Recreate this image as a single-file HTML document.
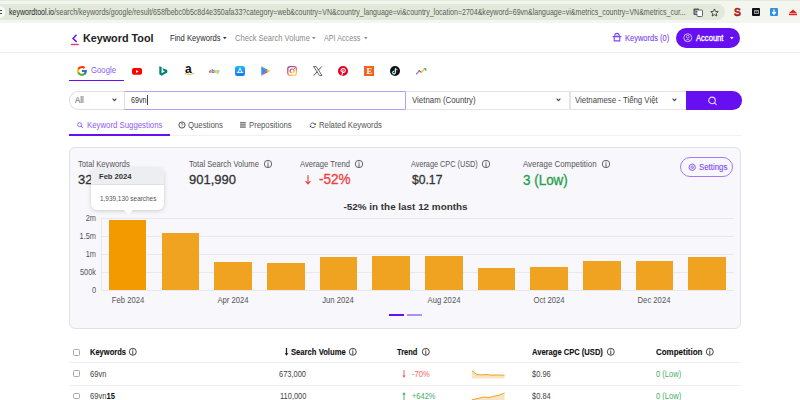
<!DOCTYPE html>
<html><head><meta charset="utf-8">
<style>
*{margin:0;padding:0;box-sizing:border-box}
html,body{width:800px;height:400px;overflow:hidden;background:#fff;font-family:"Liberation Sans",sans-serif;color:#333}
.a{position:absolute;white-space:nowrap}
svg.a{overflow:visible}
</style></head><body>
<div class="a" style="left:0px;top:0px;width:800px;height:23px;background:#f3f6ef"></div>
<div class="a" style="left:0px;top:0px;width:800px;height:1px;background:#e6ebe0"></div>
<div class="a" style="left:-20px;top:4px;width:745px;height:16px;border-radius:8px;background:#e2e9da"></div>
<div class="a" style="left:-5px;top:6px;width:10px;height:12px;border-radius:6px;background:#f6f8f3"></div>
<svg class="a" style="left:-2px;top:9px;" width="6" height="6" viewBox="0 0 6 6"><path d="M0 1.5H4M0 4.5H4" stroke="#444" stroke-width="1.2"/></svg>
<div class="a" style="left:8.60px;top:8px;font-size:9.165px;line-height:1;color:#5a5d58;font-weight:normal;transform:scaleX(0.7692);transform-origin:0 0;"><span style="color:#1f1f1f">keywordtool.io</span>/search/keywords/google/result/658fbebc0b5c8d4e350afa33?category=web&amp;country=VN&amp;country_language=vi&amp;country_location=2704&amp;keyword=69vn&amp;language=vi&amp;metrics_country=VN&amp;metrics_cur...</div>
<svg class="a" style="left:693px;top:8px;" width="10" height="9" viewBox="0 0 10 9"><rect x="0.5" y="0.5" width="5.5" height="6.5" rx="0.8" fill="#555"/><rect x="4" y="2" width="5.5" height="6.5" rx="0.8" fill="#fff" stroke="#555" stroke-width="0.9"/><text x="1.4" y="5.6" font-size="5" fill="#fff" font-family="Liberation Sans">G</text></svg>
<svg class="a" style="left:709.5px;top:8px;" width="9" height="9" viewBox="0 0 24 24"><path d="M12 2.5l2.9 6.6 7.1.6-5.4 4.7 1.6 7-6.2-3.7-6.2 3.7 1.6-7L2 9.7l7.1-.6z" fill="none" stroke="#3c3c3c" stroke-width="2.4" stroke-linejoin="round"/></svg>
<svg class="a" style="left:734px;top:8px;" width="9" height="9" viewBox="0 0 9 9"><text x="0" y="8.2" font-size="10.5" font-weight="bold" fill="#d42a20" font-family="Liberation Sans" stroke="#7a1010" stroke-width="0.4">S</text></svg>
<div class="a" style="left:752px;top:8px;width:8px;height:8px;background:#111;border-radius:1px"></div>
<svg class="a" style="left:753.5px;top:10px;" width="5" height="4" viewBox="0 0 5 4"><path d="M0.5 0.5h4v3h-4z M1.5 1.8h2" fill="none" stroke="#ddd" stroke-width="0.7"/></svg>
<div class="a" style="left:770px;top:8px;width:8px;height:8px;background:#2f8fe0;border-radius:1px"></div>
<svg class="a" style="left:771px;top:9px;" width="6" height="6" viewBox="0 0 6 6"><path d="M3 0.3V4.5M1.2 3L3 5.2 4.8 3" fill="none" stroke="#fff" stroke-width="1.2"/></svg>
<svg class="a" style="left:788px;top:9px;" width="10" height="7" viewBox="0 0 10 7"><path d="M5 0.5L9 4H1z" fill="#e02020"/><rect x="1" y="4.6" width="8" height="1.6" fill="#e02020"/></svg>
<div class="a" style="left:0px;top:52px;width:800px;height:1px;background:#eeeef2"></div>
<svg class="a" style="left:70px;top:33px;" width="10" height="13" viewBox="0 0 10 13"><path d="M6.5 1.8L3 5.4L6.7 9" fill="none" stroke="#5f1ef0" stroke-width="1.5" stroke-linejoin="miter"/><rect x="0.9" y="10.8" width="7.9" height="1.4" fill="#e5358f"/></svg>
<div class="a" style="left:82.90px;top:33px;font-size:10.800px;line-height:1;color:#222;font-weight:bold;">Keyword Tool</div>
<div class="a" style="left:170.00px;top:34px;font-size:9.180px;line-height:1;color:#2b2b2b;font-weight:normal;transform:scaleX(0.8333);transform-origin:0 0;">Find Keywords</div>
<svg class="a" style="left:223.3px;top:37.3px;" width="3.6" height="2.2" viewBox="0 0 4 2.4"><path d="M0 0H4L2 2.4z" fill="#333"/></svg>
<div class="a" style="left:234.70px;top:34px;font-size:9.096px;line-height:1;color:#8a8a8a;font-weight:normal;transform:scaleX(0.8333);transform-origin:0 0;">Check Search Volume</div>
<svg class="a" style="left:312.3px;top:37.3px;" width="3.6" height="2.2" viewBox="0 0 4 2.4"><path d="M0 0H4L2 2.4z" fill="#888"/></svg>
<div class="a" style="left:324.40px;top:34px;font-size:8.640px;line-height:1;color:#8a8a8a;font-weight:normal;transform:scaleX(0.8333);transform-origin:0 0;">API Access</div>
<svg class="a" style="left:364px;top:37.3px;" width="3.6" height="2.2" viewBox="0 0 4 2.4"><path d="M0 0H4L2 2.4z" fill="#888"/></svg>
<svg class="a" style="left:612px;top:32px;" width="10" height="10" viewBox="0 0 10 10"><path d="M2.8 4.4V3.6A2.2 2.2 0 0 1 7.2 3.6V4.4" fill="none" stroke="#7b45f3" stroke-width="1.1"/><path d="M1 4.6H9" stroke="#7b45f3" stroke-width="1.2" stroke-linecap="round"/><path d="M2.2 4.8V8.9H7.8V4.8" fill="none" stroke="#7b45f3" stroke-width="1.1" stroke-linejoin="round"/><circle cx="4.2" cy="3.3" r="0.45" fill="#7b45f3"/><circle cx="5.8" cy="3.3" r="0.45" fill="#7b45f3"/></svg>
<div class="a" style="left:624.70px;top:34px;font-size:8.648px;line-height:1;color:#7b45f3;font-weight:normal;transform:scaleX(0.8696);transform-origin:0 0;-webkit-text-stroke:0.1px currentColor">Keywords (0)</div>
<div class="a" style="left:676px;top:28.2px;width:64.2px;height:19.5px;border-radius:10px;background:#6610f2"></div>
<svg class="a" style="left:682.5px;top:33px;" width="9.5" height="9.5" viewBox="0 0 10 10"><circle cx="5" cy="5" r="4.2" fill="none" stroke="#dccbff" stroke-width="0.9"/><circle cx="5" cy="3.9" r="1.45" fill="none" stroke="#dccbff" stroke-width="0.85"/><path d="M2.6 8.2C3.2 6.4 6.8 6.4 7.4 8.2" fill="none" stroke="#dccbff" stroke-width="0.85"/></svg>
<div class="a" style="left:696.40px;top:34px;font-size:8.740px;line-height:1;color:#fff;font-weight:normal;transform:scaleX(0.8696);transform-origin:0 0;-webkit-text-stroke:0.3px currentColor">Account</div>
<svg class="a" style="left:730px;top:37px;" width="3.6" height="2.2" viewBox="0 0 4 2.4"><path d="M0 0H4L2 2.4z" fill="#fff"/></svg>
<div class="a" style="left:69px;top:79.8px;width:55px;height:1.6px;background:#6610f2"></div>
<svg class="a" style="left:77px;top:66.2px;" width="9.8" height="9.8" viewBox="4 4 40 40"><path fill="#FFC107" d="M43.6 20.1H42V20H24v8h11.3C33.7 32.7 29.2 36 24 36c-6.6 0-12-5.4-12-12s5.4-12 12-12c3.1 0 5.8 1.2 7.9 3.1l5.7-5.7C34 6.1 29.3 4 24 4 13 4 4 13 4 24s9 20 20 20 20-9 20-20c0-1.3-.1-2.6-.4-3.9z"/><path fill="#FF3D00" d="M6.3 14.7l6.6 4.8C14.7 15.1 19 12 24 12c3.1 0 5.8 1.2 7.9 3.1l5.7-5.7C34 6.1 29.3 4 24 4 16.3 4 9.7 8.3 6.3 14.7z"/><path fill="#4CAF50" d="M24 44c5.2 0 9.9-2 13.4-5.2l-6.2-5.2C29.2 35.1 26.7 36 24 36c-5.2 0-9.6-3.3-11.3-8l-6.5 5C9.5 39.6 16.2 44 24 44z"/><path fill="#1976D2" d="M43.6 20.1H42V20H24v8h11.3c-.8 2.2-2.2 4.2-4.1 5.6l6.2 5.2C37 39.2 44 34 44 24c0-1.3-.1-2.6-.4-3.9z"/></svg>
<div class="a" style="left:90.80px;top:66px;font-size:8.912px;line-height:1;color:#8a5cf6;font-weight:normal;transform:scaleX(0.8696);transform-origin:0 0;">Google</div>
<svg class="a" style="left:132px;top:67.6px;" width="10" height="6.8" viewBox="0 0 10 6.8"><rect width="10" height="6.8" rx="1.8" fill="#ff0000"/><path d="M4 1.9L6.6 3.4L4 4.9z" fill="#fff"/></svg>
<svg class="a" style="left:158.6px;top:66px;" width="8.6" height="10" viewBox="0 0 8.6 10"><path d="M0.3 0.2L2.6 1v6.3l3.3-1.9-1.6-0.8-1-2.3 5 1.7v2.6L2.6 9.8 0.3 8.3z" fill="#008373"/></svg>
<svg class="a" style="left:183.5px;top:66px;" width="11" height="10" viewBox="0 0 11 10"><text x="1.1" y="6.9" font-size="12" font-weight="bold" fill="#111" font-family="Liberation Sans">a</text><path d="M0.5 7.6Q5.5 9.6 10.5 7.4" fill="none" stroke="#f6b24a" stroke-width="1"/></svg>
<svg class="a" style="left:209px;top:68px;" width="11" height="5" viewBox="0 0 11 5"><text x="0" y="4.6" font-size="5" font-weight="bold" font-family="Liberation Sans" letter-spacing="-0.3"><tspan fill="#e53238">e</tspan><tspan fill="#0064d2">b</tspan><tspan fill="#f5af02">a</tspan><tspan fill="#86b817">y</tspan></text></svg>
<svg class="a" style="left:235.2px;top:66px;" width="10" height="10" viewBox="0 0 10 10"><defs><linearGradient id="as" x1="0" y1="0" x2="0" y2="1"><stop offset="0" stop-color="#1ebbf5"/><stop offset="1" stop-color="#1d6ff2"/></linearGradient></defs><rect width="10" height="10" rx="2.2" fill="url(#as)"/><path d="M5.3 2.2L3 6.4M4.7 2.2L7 6.4M2.2 6.4H7.8" stroke="#fff" stroke-width="0.9" stroke-linecap="round"/></svg>
<svg class="a" style="left:261.3px;top:66px;" width="9.5" height="10" viewBox="0 0 9.5 10"><path d="M0.3 0.3L5.6 5 0.3 9.7z" fill="#4285f4"/><path d="M0.3 0.3L7.2 4.1 5.6 5z" fill="#34a853"/><path d="M0.3 9.7L7.2 5.9 5.6 5z" fill="#ea4335"/><path d="M7.2 4.1L9.3 5 7.2 5.9 5.6 5z" fill="#fbbc04"/></svg>
<svg class="a" style="left:286.8px;top:66px;" width="10.2" height="10" viewBox="0 0 10 10"><defs><linearGradient id="ig" x1="0" y1="0" x2="0.6" y2="1"><stop offset="0" stop-color="#8a3ab9"/><stop offset="0.5" stop-color="#e95950"/><stop offset="1" stop-color="#fccc63"/></linearGradient></defs><rect x="0.7" y="0.7" width="8.6" height="8.6" rx="2.4" fill="none" stroke="url(#ig)" stroke-width="1.3"/><circle cx="5" cy="5" r="2" fill="none" stroke="url(#ig)" stroke-width="1.2"/><circle cx="7.4" cy="2.6" r="0.5" fill="#c13584"/></svg>
<svg class="a" style="left:312.7px;top:66px;" width="9.5" height="10" viewBox="0 0 9.5 10"><path d="M0.6 0.5h2.6l5.8 9h-2.6z" fill="none" stroke="#444" stroke-width="0.8"/><path d="M8.6 0.5L5.3 4.3M0.8 9.5L4.2 5.7" stroke="#444" stroke-width="0.9"/></svg>
<svg class="a" style="left:338.4px;top:66px;" width="10" height="10" viewBox="0 0 10 10"><circle cx="5" cy="5" r="5" fill="#e60023"/><path d="M3.4 5.6C2.8 5 2.9 3.9 3.6 3.2 4.6 2.2 6.8 2.4 7.2 3.8 7.6 5.3 6.5 6.7 5.2 6.4" fill="none" stroke="#fff" stroke-width="1.05" stroke-linecap="round"/><path d="M5.1 4.1L4 9.2" fill="none" stroke="#fff" stroke-width="1.1" stroke-linecap="round"/></svg>
<svg class="a" style="left:364.1px;top:66px;" width="10" height="10" viewBox="0 0 10 10"><rect width="10" height="10" fill="#f1641e"/><text x="2.4" y="8.3" font-size="8.5" fill="#fff" font-family="Liberation Serif" font-weight="bold">E</text></svg>
<svg class="a" style="left:390px;top:66px;" width="10" height="10" viewBox="0 0 10 10"><circle cx="5" cy="5" r="5" fill="#111"/><path d="M5.6 2.2v4.3a1.4 1.4 0 1 1-1.3-1.4" fill="none" stroke="#25f4ee" stroke-width="1" transform="translate(-0.4 0.2)"/><path d="M5.6 2.2v4.3a1.4 1.4 0 1 1-1.3-1.4M5.6 2.4c0.4 0.9 1 1.3 1.8 1.3" fill="none" stroke="#fff" stroke-width="0.9"/><path d="M5.8 2.4c0.4 0.9 1 1.3 1.8 1.3" fill="none" stroke="#fe2c55" stroke-width="0.5" transform="translate(0.3 0.3)"/></svg>
<svg class="a" style="left:415.7px;top:68.2px;" width="10.5" height="6.5" viewBox="0 0 10.5 6.5"><path d="M0.6 5.8L3.2 2.8" stroke="#4285f4" stroke-width="1.2" stroke-linecap="round"/><path d="M3.2 2.8L5.2 4.4" stroke="#ea4335" stroke-width="1.2" stroke-linecap="round"/><path d="M5.2 4.4L7.6 1.9" stroke="#fbbc04" stroke-width="1.2" stroke-linecap="round"/><path d="M7.2 0.2H10.3V3.2z" fill="#34a853"/></svg>
<div class="a" style="left:68.75px;top:91px;width:56.5px;height:18.5px;border:1px solid #e1e1e6;border-right:none;border-radius:9.25px 0 0 9.25px;background:#fff"></div>
<div class="a" style="left:75.25px;top:95px;font-size:9.444px;line-height:1;color:#555;font-weight:normal;transform:scaleX(0.8333);transform-origin:0 0;">All</div>
<svg class="a" style="left:111.9px;top:98.3px;" width="5" height="3.4" viewBox="0 0 5 3.4"><path d="M0.6 0.6L2.5 2.6 4.4 0.6" fill="none" stroke="#444" stroke-width="1.1"/></svg>
<div class="a" style="left:124.4px;top:91px;width:281.6px;height:18.5px;border:1px solid #b99cf7;border-left:1px solid #e1e1e6;background:#fff"></div>
<div class="a" style="left:131.00px;top:96px;font-size:8.640px;line-height:1;color:#333;font-weight:normal;transform:scaleX(0.8333);transform-origin:0 0;">69vn</div>
<div class="a" style="left:147.2px;top:95px;width:0.7px;height:9.8px;background:#444"></div>
<div class="a" style="left:405px;top:91px;width:164.5px;height:18.5px;border:1px solid #e4e4e8;border-left:1px solid #b99cf7;background:#fff"></div>
<div class="a" style="left:411.90px;top:95px;font-size:9.444px;line-height:1;color:#444;font-weight:normal;transform:scaleX(0.8333);transform-origin:0 0;">Vietnam (Country)</div>
<svg class="a" style="left:555.7px;top:98.3px;" width="5" height="3.4" viewBox="0 0 5 3.4"><path d="M0.6 0.6L2.5 2.6 4.4 0.6" fill="none" stroke="#444" stroke-width="1.1"/></svg>
<div class="a" style="left:569.5px;top:91px;width:117px;height:18.5px;border:1px solid #e4e4e8;border-left:1px solid #e4e4e8;background:#fff"></div>
<div class="a" style="left:575.25px;top:95px;font-size:9.396px;line-height:1;color:#444;font-weight:normal;transform:scaleX(0.8333);transform-origin:0 0;">Vietnamese - Tiếng Việt</div>
<svg class="a" style="left:672.2px;top:98.3px;" width="5" height="3.4" viewBox="0 0 5 3.4"><path d="M0.6 0.6L2.5 2.6 4.4 0.6" fill="none" stroke="#444" stroke-width="1.1"/></svg>
<div class="a" style="left:686px;top:91px;width:56px;height:18.5px;border-radius:0 9.25px 9.25px 0;background:#6610f2"></div>
<svg class="a" style="left:707px;top:95px;" width="11" height="11" viewBox="0 0 11 11"><circle cx="5" cy="5.4" r="3.3" fill="none" stroke="#e2d4ff" stroke-width="1.05"/><path d="M7.4 7.8L9.3 9.6" stroke="#e2d4ff" stroke-width="1.1" stroke-linecap="round"/></svg>
<div class="a" style="left:69px;top:135px;width:672px;height:1px;background:#f1f1f4"></div>
<div class="a" style="left:69px;top:133.9px;width:101px;height:1.7px;background:#6610f2"></div>
<svg class="a" style="left:77.2px;top:121.9px;" width="6.4" height="6.4" viewBox="0 0 10 10"><circle cx="4.2" cy="4.2" r="3.2" fill="none" stroke="#8b5cf6" stroke-width="1.4"/><path d="M6.6 6.6L9.2 9.2" stroke="#8b5cf6" stroke-width="1.5" stroke-linecap="round"/></svg>
<div class="a" style="left:86.90px;top:121px;font-size:8.970px;line-height:1;color:#8b5cf6;font-weight:normal;transform:scaleX(0.8696);transform-origin:0 0;">Keyword Suggestions</div>
<svg class="a" style="left:177.5px;top:120.65px;" width="8" height="8" viewBox="0 0 8 8"><circle cx="4" cy="4" r="3.1" fill="none" stroke="#555" stroke-width="1"/><path d="M3 3.1C3.1 2.2 4.9 2.2 4.9 3.2 4.9 3.9 4 3.9 4 4.7" fill="none" stroke="#555" stroke-width="0.8"/><circle cx="4" cy="5.6" r="0.45" fill="#555"/></svg>
<div class="a" style="left:187.90px;top:121px;font-size:8.935px;line-height:1;color:#555;font-weight:normal;transform:scaleX(0.8696);transform-origin:0 0;">Questions</div>
<svg class="a" style="left:240px;top:122px;" width="5.8" height="5.8" viewBox="0 0 6 6"><rect x="0" y="0" width="6" height="1.5" fill="#777"/><rect x="0" y="2.25" width="6" height="1.5" fill="#777"/><rect x="0" y="4.5" width="6" height="1.5" fill="#777"/></svg>
<div class="a" style="left:249.20px;top:121px;font-size:8.912px;line-height:1;color:#555;font-weight:normal;transform:scaleX(0.8696);transform-origin:0 0;">Prepositions</div>
<svg class="a" style="left:308.5px;top:121.5px;" width="7.5" height="6.5" viewBox="0 0 7.5 6.5"><path d="M1.2 2.6A2.8 2.8 0 0 1 6.2 2.4" fill="none" stroke="#555" stroke-width="0.9"/><path d="M6.4 4A2.8 2.8 0 0 1 1.4 4.2" fill="none" stroke="#555" stroke-width="0.9"/><path d="M5 2.7L6.9 2.9 6.7 1z" fill="#333"/><path d="M2.6 3.8L0.7 3.6 0.9 5.5z" fill="#333"/></svg>
<div class="a" style="left:318.50px;top:121px;font-size:8.912px;line-height:1;color:#555;font-weight:normal;transform:scaleX(0.8696);transform-origin:0 0;">Related Keywords</div>
<div class="a" style="left:69.4px;top:147.4px;width:671.6px;height:181.6px;border:1px solid #e1e1e8;border-radius:6px;background:#f8f7fc"></div>
<div class="a" style="left:77.50px;top:160px;font-size:8.568px;line-height:1;color:#555;font-weight:normal;transform:scaleX(0.8929);transform-origin:0 0;">Total Keywords</div>
<div class="a" style="left:77.50px;top:173px;font-size:13.520px;line-height:1;color:#333;font-weight:normal;transform:scaleX(0.9615);transform-origin:0 0;-webkit-text-stroke:0.3px currentColor">32</div>
<div class="a" style="left:189.00px;top:160px;font-size:8.546px;line-height:1;color:#555;font-weight:normal;transform:scaleX(0.8929);transform-origin:0 0;">Total Search Volume</div>
<svg class="a" style="left:263.4px;top:158.9px;" width="10" height="10" viewBox="0 0 10 10"><circle cx="5" cy="5" r="3.7" fill="none" stroke="#555" stroke-width="0.9"/><rect x="4.55" y="4.2" width="0.9" height="3.80" fill="#555"/><circle cx="5" cy="3.1" r="0.55" fill="#555"/></svg>
<div class="a" style="left:188.75px;top:173px;font-size:13.520px;line-height:1;color:#333;font-weight:normal;transform:scaleX(0.9615);transform-origin:0 0;-webkit-text-stroke:0.3px currentColor">901,990</div>
<div class="a" style="left:300.00px;top:160px;font-size:8.557px;line-height:1;color:#555;font-weight:normal;transform:scaleX(0.8929);transform-origin:0 0;">Average Trend</div>
<svg class="a" style="left:354.25px;top:158.9px;" width="10" height="10" viewBox="0 0 10 10"><circle cx="5" cy="5" r="3.7" fill="none" stroke="#555" stroke-width="0.9"/><rect x="4.55" y="4.2" width="0.9" height="3.80" fill="#555"/><circle cx="5" cy="3.1" r="0.55" fill="#555"/></svg>
<svg class="a" style="left:304.5px;top:174.5px;" width="6" height="9.5" viewBox="0 0 6 9.5"><path d="M3 0V8.8M0.6 6.2L3 8.9 5.4 6.2" fill="none" stroke="#f03c3c" stroke-width="1.1"/></svg>
<div class="a" style="left:318.50px;top:172px;font-size:14.040px;line-height:1;color:#f03c3c;font-weight:normal;transform:scaleX(0.9615);transform-origin:0 0;-webkit-text-stroke:0.3px currentColor">-52%</div>
<div class="a" style="left:411.25px;top:161px;font-size:8.186px;line-height:1;color:#555;font-weight:normal;transform:scaleX(0.8929);transform-origin:0 0;">Average CPC (USD)</div>
<svg class="a" style="left:480.5px;top:158.9px;" width="10" height="10" viewBox="0 0 10 10"><circle cx="5" cy="5" r="3.7" fill="none" stroke="#555" stroke-width="0.9"/><rect x="4.55" y="4.2" width="0.9" height="3.80" fill="#555"/><circle cx="5" cy="3.1" r="0.55" fill="#555"/></svg>
<div class="a" style="left:411.90px;top:174px;font-size:12.636px;line-height:1;color:#333;font-weight:normal;transform:scaleX(0.9615);transform-origin:0 0;-webkit-text-stroke:0.3px currentColor">$0.17</div>
<div class="a" style="left:522.75px;top:160px;font-size:8.859px;line-height:1;color:#555;font-weight:normal;transform:scaleX(0.8929);transform-origin:0 0;">Average Competition</div>
<svg class="a" style="left:601px;top:158.9px;" width="10" height="10" viewBox="0 0 10 10"><circle cx="5" cy="5" r="3.7" fill="none" stroke="#555" stroke-width="0.9"/><rect x="4.55" y="4.2" width="0.9" height="3.80" fill="#555"/><circle cx="5" cy="3.1" r="0.55" fill="#555"/></svg>
<div class="a" style="left:523.10px;top:173px;font-size:13.988px;line-height:1;color:#22a04b;font-weight:normal;transform:scaleX(0.9615);transform-origin:0 0;-webkit-text-stroke:0.3px currentColor">3 (Low)</div>
<div class="a" style="left:679.8px;top:157px;width:53px;height:19.7px;border:1px solid #a57af6;border-radius:10px"></div>
<svg class="a" style="left:687.6px;top:162.8px;" width="8.4" height="8.4" viewBox="0 0 24 24"><path fill="none" stroke="#7c4af4" stroke-width="2.8" d="M12 2.5l2 1.8 2.7-.4 1.1 2.5 2.5 1.1-.4 2.7 1.8 2-1.8 2 .4 2.7-2.5 1.1-1.1 2.5-2.7-.4-2 1.8-2-1.8-2.7.4-1.1-2.5-2.5-1.1.4-2.7-1.8-2 1.8-2-.4-2.7 2.5-1.1 1.1-2.5 2.7.4z"/><circle cx="12" cy="12" r="3.4" fill="none" stroke="#7c4af4" stroke-width="2.6"/></svg>
<div class="a" style="left:698.60px;top:163px;font-size:9.039px;line-height:1;color:#7c4af4;font-weight:normal;transform:scaleX(0.8696);transform-origin:0 0;-webkit-text-stroke:0.12px currentColor">Settings</div>
<div class="a" style="left:343.50px;top:202px;font-size:9.900px;line-height:1;color:#333;font-weight:bold;">-52% in the last 12 months</div>
<div class="a" style="left:100.6px;top:217.8px;width:633px;height:1px;background:#e8e8ee"></div>
<div class="a" style="left:100.6px;top:235.9px;width:633px;height:1px;background:#e8e8ee"></div>
<div class="a" style="left:100.6px;top:253.9px;width:633px;height:1px;background:#e8e8ee"></div>
<div class="a" style="left:100.6px;top:271.9px;width:633px;height:1px;background:#e8e8ee"></div>
<div class="a" style="left:100.6px;top:289.9px;width:633px;height:1px;background:#e8e8ee"></div>
<div class="a" style="left:100.6px;top:217.8px;width:1px;height:73px;background:#e8e8ee"></div>
<div class="a" style="left:96.00px;top:214px;font-size:8.856px;line-height:1;color:#555;font-weight:normal;transform:translateX(-100%) scaleX(0.8333);transform-origin:100% 0;">2m</div>
<div class="a" style="left:96.00px;top:232px;font-size:8.856px;line-height:1;color:#555;font-weight:normal;transform:translateX(-100%) scaleX(0.8333);transform-origin:100% 0;">1.5m</div>
<div class="a" style="left:96.00px;top:250px;font-size:8.856px;line-height:1;color:#555;font-weight:normal;transform:translateX(-100%) scaleX(0.8333);transform-origin:100% 0;">1m</div>
<div class="a" style="left:96.00px;top:268px;font-size:8.856px;line-height:1;color:#555;font-weight:normal;transform:translateX(-100%) scaleX(0.8333);transform-origin:100% 0;">500k</div>
<div class="a" style="left:96.00px;top:286px;font-size:8.856px;line-height:1;color:#555;font-weight:normal;transform:translateX(-100%) scaleX(0.8333);transform-origin:100% 0;">0</div>
<div class="a" style="left:108.9px;top:220.1px;width:37.6px;height:70.3px;background:#f29a00"></div>
<div class="a" style="left:161.57px;top:232.8px;width:37.6px;height:57.6px;background:#f0a321"></div>
<div class="a" style="left:214.24px;top:262px;width:37.6px;height:28.4px;background:#f0a321"></div>
<div class="a" style="left:266.91px;top:262.5px;width:37.6px;height:27.9px;background:#f0a321"></div>
<div class="a" style="left:319.58px;top:256.5px;width:37.6px;height:33.9px;background:#f0a321"></div>
<div class="a" style="left:372.25px;top:256px;width:37.6px;height:34.4px;background:#f0a321"></div>
<div class="a" style="left:424.92px;top:255.5px;width:37.6px;height:34.9px;background:#f0a321"></div>
<div class="a" style="left:477.59px;top:267.5px;width:37.6px;height:22.9px;background:#f0a321"></div>
<div class="a" style="left:530.26px;top:266.5px;width:37.6px;height:23.9px;background:#f0a321"></div>
<div class="a" style="left:582.93px;top:261px;width:37.6px;height:29.4px;background:#f0a321"></div>
<div class="a" style="left:635.6px;top:260.7px;width:37.6px;height:29.7px;background:#f0a321"></div>
<div class="a" style="left:688.27px;top:256.8px;width:37.6px;height:33.6px;background:#f0a321"></div>
<div class="a" style="left:127.70px;top:296px;font-size:9.228px;line-height:1;color:#555;font-weight:normal;transform:translateX(-50%) scaleX(0.8333);transform-origin:50% 0;">Feb 2024</div>
<div class="a" style="left:233.04px;top:296px;font-size:9.228px;line-height:1;color:#555;font-weight:normal;transform:translateX(-50%) scaleX(0.8333);transform-origin:50% 0;">Apr 2024</div>
<div class="a" style="left:338.38px;top:296px;font-size:9.228px;line-height:1;color:#555;font-weight:normal;transform:translateX(-50%) scaleX(0.8333);transform-origin:50% 0;">Jun 2024</div>
<div class="a" style="left:443.72px;top:296px;font-size:9.228px;line-height:1;color:#555;font-weight:normal;transform:translateX(-50%) scaleX(0.8333);transform-origin:50% 0;">Aug 2024</div>
<div class="a" style="left:549.06px;top:296px;font-size:9.228px;line-height:1;color:#555;font-weight:normal;transform:translateX(-50%) scaleX(0.8333);transform-origin:50% 0;">Oct 2024</div>
<div class="a" style="left:654.40px;top:296px;font-size:9.228px;line-height:1;color:#555;font-weight:normal;transform:translateX(-50%) scaleX(0.8333);transform-origin:50% 0;">Dec 2024</div>
<div class="a" style="left:389px;top:314.3px;width:15px;height:1.8px;background:#6610f2"></div>
<div class="a" style="left:407px;top:314.3px;width:14.5px;height:1.8px;background:#b08ef7"></div>
<div class="a" style="left:90.5px;top:167.6px;width:73.5px;height:42.4px;background:#fff;border-radius:6px;box-shadow:0 1px 4px rgba(0,0,0,.18);overflow:hidden"><div style="height:17px;background:#eceef1;border-bottom:1px solid #dfe1e5"></div></div>
<svg class="a" style="left:123.5px;top:209.5px;" width="9" height="5" viewBox="0 0 9 5"><path d="M0 0L4.5 4.5L9 0z" fill="#fff"/></svg>
<div class="a" style="left:99.00px;top:173px;font-size:7.590px;line-height:1;color:#333;font-weight:bold;">Feb 2024</div>
<div class="a" style="left:99.50px;top:195px;font-size:7.073px;line-height:1;color:#555;font-weight:normal;transform:scaleX(0.9091);transform-origin:0 0;">1,939,130 searches</div>
<div class="a" style="left:73.25px;top:349px;width:6.6px;height:6.6px;border:0.9px solid #aaa;border-radius:1.5px;background:#fff"></div>
<div class="a" style="left:89.75px;top:348px;font-size:8.584px;line-height:1;color:#111;font-weight:bold;transform:scaleX(0.8772);transform-origin:0 0;-webkit-text-stroke:0.12px currentColor">Keywords</div>
<svg class="a" style="left:127.6px;top:347.2px;" width="9.6" height="9.6" viewBox="0 0 9.6 9.6"><circle cx="4.8" cy="4.8" r="3.5" fill="none" stroke="#333" stroke-width="0.9"/><rect x="4.35" y="4.0" width="0.9" height="3.61" fill="#333"/><circle cx="4.8" cy="2.9" r="0.55" fill="#333"/></svg>
<svg class="a" style="left:283.8px;top:348px;" width="5" height="8" viewBox="0 0 5 8"><path d="M2.5 0V6" stroke="#222" stroke-width="1.25"/><path d="M0.6 5.3L2.5 7.8 4.4 5.3z" fill="#222"/></svg>
<div class="a" style="left:291.00px;top:348px;font-size:8.721px;line-height:1;color:#111;font-weight:bold;transform:scaleX(0.8772);transform-origin:0 0;-webkit-text-stroke:0.12px currentColor">Search Volume</div>
<svg class="a" style="left:348.2px;top:347.2px;" width="9.6" height="9.6" viewBox="0 0 9.6 9.6"><circle cx="4.8" cy="4.8" r="3.5" fill="none" stroke="#333" stroke-width="0.9"/><rect x="4.35" y="4.0" width="0.9" height="3.61" fill="#333"/><circle cx="4.8" cy="2.9" r="0.55" fill="#333"/></svg>
<div class="a" style="left:397.20px;top:348px;font-size:8.537px;line-height:1;color:#111;font-weight:bold;transform:scaleX(0.8772);transform-origin:0 0;-webkit-text-stroke:0.12px currentColor">Trend</div>
<svg class="a" style="left:420.59999999999997px;top:347.2px;" width="9.6" height="9.6" viewBox="0 0 9.6 9.6"><circle cx="4.8" cy="4.8" r="3.5" fill="none" stroke="#333" stroke-width="0.9"/><rect x="4.35" y="4.0" width="0.9" height="3.61" fill="#333"/><circle cx="4.8" cy="2.9" r="0.55" fill="#333"/></svg>
<div class="a" style="left:531.50px;top:348px;font-size:8.653px;line-height:1;color:#111;font-weight:bold;transform:scaleX(0.8772);transform-origin:0 0;-webkit-text-stroke:0.12px currentColor">Average CPC (USD)</div>
<svg class="a" style="left:605.5px;top:347.2px;" width="9.6" height="9.6" viewBox="0 0 9.6 9.6"><circle cx="4.8" cy="4.8" r="3.5" fill="none" stroke="#333" stroke-width="0.9"/><rect x="4.35" y="4.0" width="0.9" height="3.61" fill="#333"/><circle cx="4.8" cy="2.9" r="0.55" fill="#333"/></svg>
<div class="a" style="left:655.60px;top:348px;font-size:9.086px;line-height:1;color:#111;font-weight:bold;transform:scaleX(0.8772);transform-origin:0 0;-webkit-text-stroke:0.12px currentColor">Competition</div>
<svg class="a" style="left:704.5px;top:347.2px;" width="9.6" height="9.6" viewBox="0 0 9.6 9.6"><circle cx="4.8" cy="4.8" r="3.5" fill="none" stroke="#333" stroke-width="0.9"/><rect x="4.35" y="4.0" width="0.9" height="3.61" fill="#333"/><circle cx="4.8" cy="2.9" r="0.55" fill="#333"/></svg>
<div class="a" style="left:69px;top:362.3px;width:672px;height:1px;background:#f0f0f3"></div>
<div class="a" style="left:73.25px;top:370.2px;width:6.6px;height:6.6px;border:0.9px solid #aaa;border-radius:1.5px;background:#fff"></div>
<div class="a" style="left:89.75px;top:370px;font-size:8.512px;line-height:1;color:#444;font-weight:normal;transform:scaleX(0.8929);transform-origin:0 0;">69vn</div>
<div class="a" style="left:279.00px;top:370px;font-size:8.366px;line-height:1;color:#444;font-weight:normal;transform:scaleX(0.8929);transform-origin:0 0;">673,000</div>
<svg class="a" style="left:401.8px;top:369.8px;" width="4" height="8" viewBox="0 0 4 8"><path d="M2 0V6" stroke="#f47b7b" stroke-width="1.2"/><path d="M0.2 5.4L2 7.8 3.8 5.4z" fill="#f26464"/></svg>
<div class="a" style="left:411.70px;top:370px;font-size:8.465px;line-height:1;color:#f26464;font-weight:normal;transform:scaleX(0.8929);transform-origin:0 0;">-70%</div>
<svg class="a" style="left:471.7px;top:369.5px;" width="32.5" height="8.5" viewBox="0 0 32.5 8.5"><path d="M0 0.8L5 4.6 10 4.9 15 4.6 20 5.2 25 5 32.5 5.2V8.5H0z" fill="#f8e3c4"/><path d="M0 0.8L5 4.6 10 4.9 15 4.6 20 5.2 25 5 32.5 5.2" fill="none" stroke="#f0a321" stroke-width="1"/></svg>
<div class="a" style="left:531.50px;top:370px;font-size:8.389px;line-height:1;color:#444;font-weight:normal;transform:scaleX(0.8929);transform-origin:0 0;">$0.96</div>
<div class="a" style="left:655.60px;top:370px;font-size:8.501px;line-height:1;color:#3fae5f;font-weight:normal;transform:scaleX(0.8929);transform-origin:0 0;">0 (Low)</div>
<div class="a" style="left:69px;top:385.2px;width:672px;height:1px;background:#f0f0f3"></div>
<div class="a" style="left:73.25px;top:392.5px;width:6.6px;height:6.6px;border:0.9px solid #aaa;border-radius:1.5px;background:#fff"></div>
<div class="a" style="left:89.75px;top:392px;font-size:8.512px;line-height:1;color:#444;font-weight:normal;transform:scaleX(0.8929);transform-origin:0 0;">69vn<b style="color:#111">15</b></div>
<div class="a" style="left:279.50px;top:392px;font-size:8.366px;line-height:1;color:#444;font-weight:normal;transform:scaleX(0.8929);transform-origin:0 0;">110,000</div>
<svg class="a" style="left:401.8px;top:392px;" width="4" height="8" viewBox="0 0 4 8"><path d="M2 8V2" stroke="#6cc083" stroke-width="1.2"/><path d="M0.2 2.6L2 0.2 3.8 2.6z" fill="#3fae5f"/></svg>
<div class="a" style="left:412.20px;top:392px;font-size:8.375px;line-height:1;color:#3fae5f;font-weight:normal;transform:scaleX(0.8929);transform-origin:0 0;">+642%</div>
<svg class="a" style="left:471.7px;top:391.5px;" width="32.5" height="8.5" viewBox="0 0 32.5 8.5"><path d="M0 7.8L6 6.4 12 5 17 5.6 22 4.2 27 3.2 32.5 1V8.5H0z" fill="#f8e3c4"/><path d="M0 7.8L6 6.4 12 5 17 5.6 22 4.2 27 3.2 32.5 1" fill="none" stroke="#f0a321" stroke-width="1"/></svg>
<div class="a" style="left:531.50px;top:392px;font-size:8.389px;line-height:1;color:#444;font-weight:normal;transform:scaleX(0.8929);transform-origin:0 0;">$0.84</div>
<div class="a" style="left:655.60px;top:392px;font-size:8.501px;line-height:1;color:#3fae5f;font-weight:normal;transform:scaleX(0.8929);transform-origin:0 0;">0 (Low)</div>
</body></html>
